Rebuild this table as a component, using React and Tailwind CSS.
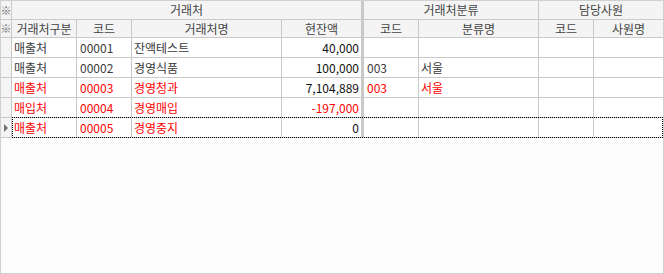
import React from "react";

const rows = [
  { kind: "매출처", code: "00001", name: "잔액테스트", amt: "40,000", gcode: "", gname: "", red: false },
  { kind: "매출처", code: "00002", name: "경영식품", amt: "100,000", gcode: "003", gname: "서울", red: false },
  { kind: "매출처", code: "00003", name: "경영청과", amt: "7,104,889", gcode: "003", gname: "서울", red: true },
  { kind: "매입처", code: "00004", name: "경영매입", amt: "-197,000", gcode: "", gname: "", red: true },
  { kind: "매출처", code: "00005", name: "경영중지", amt: "0", gcode: "", gname: "", red: true, selected: true },
];

const Star = () => (
  <span className="text-[11px] leading-none text-[#6a6a6a]">※</span>
);

const App = () => {
  return (
    <div
      className="w-[664px] h-[274px] bg-[#fdfdfd] border border-[#d0d0d0] text-[12px] text-[#444] overflow-hidden"
      style={{ fontFamily: '"Noto Sans CJK KR", "Noto Sans", sans-serif' }}
    >
      {/* header row 1 */}
      <div className="flex h-[19px] bg-[#f4f4f4] border-b border-[#c9c9c9]">
        <div className="w-[11px] shrink-0 border-r border-[#c9c9c9] flex items-center justify-center">
          <Star />
        </div>
        <div className="w-[352px] shrink-0 border-r-[3px] border-[#c9c9c9] flex items-center justify-center">
          거래처
        </div>
        <div className="w-[175px] shrink-0 border-r border-[#c9c9c9] flex items-center justify-center">
          거래처분류
        </div>
        <div className="w-[124px] shrink-0 flex items-center justify-center">담당사원</div>
      </div>

      {/* header row 2 */}
      <div className="flex h-[18px] bg-[#f4f4f4] border-b border-[#c9c9c9]">
        <div className="w-[11px] shrink-0 border-r border-[#c9c9c9] flex items-center justify-center">
          <Star />
        </div>
        <div className="w-[65px] shrink-0 border-r border-[#c9c9c9] flex items-center justify-center">거래처구분</div>
        <div className="w-[55px] shrink-0 border-r border-[#c9c9c9] flex items-center justify-center">코드</div>
        <div className="w-[150px] shrink-0 border-r border-[#c9c9c9] flex items-center justify-center">거래처명</div>
        <div className="w-[82px] shrink-0 border-r-[3px] border-[#c9c9c9] flex items-center justify-center">현잔액</div>
        <div className="w-[55px] shrink-0 border-r border-[#c9c9c9] flex items-center justify-center">코드</div>
        <div className="w-[120px] shrink-0 border-r border-[#c9c9c9] flex items-center justify-center">분류명</div>
        <div className="w-[55px] shrink-0 border-r border-[#c9c9c9] flex items-center justify-center">코드</div>
        <div className="w-[69px] shrink-0 flex items-center justify-center">사원명</div>
      </div>

      {/* data rows */}
      {rows.map((r) => {
        const tc = r.red ? "text-[#ff0000]" : "text-[#3a3a3a]";
        const ac = r.amt.startsWith("-") ? "text-[#ff0000]" : "text-[#111]";
        return (
          <div key={r.code} className="relative flex h-[20px] bg-white border-b border-[#c9c9c9]">
            <div className="w-[11px] shrink-0 bg-[#f4f4f4] border-r border-[#c9c9c9] flex items-center justify-center">
              {r.selected && (
                <span className="w-0 h-0 border-y-[4px] border-y-transparent border-l-[4px] border-l-[#707070]" />
              )}
            </div>
            <div className={`w-[65px] shrink-0 border-r border-[#c9c9c9] flex items-center pl-[2px] ${tc}`}>{r.kind}</div>
            <div className={`w-[55px] shrink-0 border-r border-[#c9c9c9] flex items-center pl-[3px] ${tc}`}>{r.code}</div>
            <div className={`w-[150px] shrink-0 border-r border-[#c9c9c9] flex items-center pl-[2px] ${tc}`}>{r.name}</div>
            <div className={`w-[82px] shrink-0 border-r-[3px] border-[#c9c9c9] flex items-center justify-end pr-[2px] ${ac}`}>{r.amt}</div>
            <div className={`w-[55px] shrink-0 border-r border-[#c9c9c9] flex items-center pl-[3px] ${tc}`}>{r.gcode}</div>
            <div className={`w-[120px] shrink-0 border-r border-[#c9c9c9] flex items-center pl-[2px] ${tc}`}>{r.gname}</div>
            <div className="w-[55px] shrink-0 border-r border-[#c9c9c9]" />
            <div className="w-[69px] shrink-0" />
            {r.selected && (
              <div className="absolute left-[11px] right-0 top-[-1px] bottom-[-1px] border border-dotted border-black pointer-events-none" />
            )}
          </div>
        );
      })}
    </div>
  );
};

export default App;
